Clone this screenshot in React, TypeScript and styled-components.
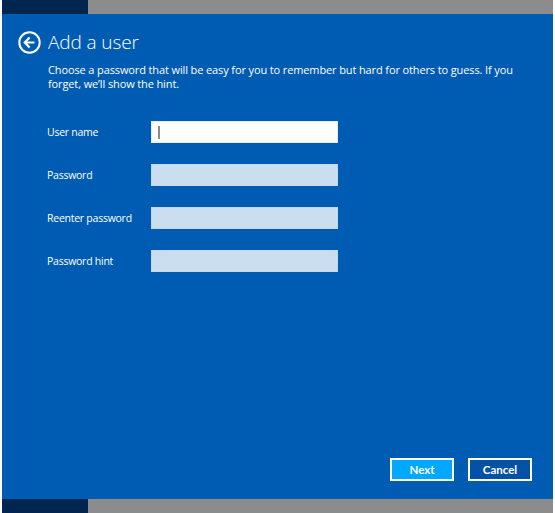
import * as React from 'react';
import styled, { createGlobalStyle } from 'styled-components';

const GlobalStyle = createGlobalStyle`
    html, body {
        margin: 0;
        padding: 0;
        background: #ffffff;
    }
`;

const Frame = styled.div`
    width: 555px;
    height: 513px;
    box-sizing: border-box;
    padding: 0 2px;
    display: flex;
    flex-direction: column;
    background: #ffffff;
    font-family: "Open Sans", "Noto Sans", sans-serif;
`;

const Strip = styled.div`
    height: 14px;
    display: flex;
    flex-shrink: 0;
`;

const StripDark = styled.div`
    width: 86px;
    background: #00264f;
`;

const StripGray = styled.div`
    flex: 1;
    background: #8c8c8c;
`;

const Panel = styled.div`
    flex: 1;
    background: #005cb2;
    color: #ffffff;
    display: flex;
    flex-direction: column;
    padding: 17px 21px 18px 16px;
`;

const Header = styled.div`
    display: flex;
    align-items: center;
    gap: 7px;
    height: 22px;
`;

const BackButton = styled.button`
    width: 23px;
    height: 23px;
    padding: 0;
    border: none;
    background: transparent;
    display: flex;
    cursor: pointer;
`;

const Title = styled.h1`
    margin: 0;
    font-size: 19px;
    font-weight: 300;
    line-height: 22px;
    letter-spacing: -0.1px;
`;

const Intro = styled.p`
    margin: 10px 0 0 30px;
    width: 478px;
    font-size: 11px;
    line-height: 14px;
    letter-spacing: -0.12px;
`;

const Form = styled.div`
    margin: 30px 0 0 29px;
    display: flex;
    flex-direction: column;
    gap: 21px;
`;

const Row = styled.label`
    display: flex;
    align-items: center;
    height: 22px;
`;

const Label = styled.span`
    width: 104px;
    font-size: 10.5px;
    letter-spacing: -0.25px;
`;

const Field = styled.div<{ $active?: boolean }>`
    width: 187px;
    height: 22px;
    box-sizing: border-box;
    background: ${p => (p.$active ? '#ffffff' : '#cbdef0')};
    border: 1px solid ${p => (p.$active ? '#e6eef7' : '#c3d8ee')};
    display: flex;
    align-items: center;
    padding-left: 6px;
`;

const Caret = styled.span`
    width: 2px;
    height: 13px;
    background: #8a8a8a;
`;

const Actions = styled.div`
    margin-top: auto;
    display: flex;
    justify-content: flex-end;
    gap: 14px;
`;

const Action = styled.button<{ $primary?: boolean }>`
    width: 64px;
    height: 23px;
    box-sizing: border-box;
    border: 2px solid #ffffff;
    background: ${p => (p.$primary ? '#00a9ff' : '#0551a6')};
    color: #ffffff;
    font-family: Lato, "Open Sans", sans-serif;
    font-size: 11.5px;
    font-weight: 700;
    padding: 0;
    cursor: pointer;
`;

const BackIcon: React.FC = () => (
    <svg width="23" height="23" viewBox="0 0 23 23" fill="none" stroke="#ffffff">
        <circle cx="11.5" cy="11.5" r="10.2" strokeWidth="2" />
        <path d="M11.6 6.6 L6.8 11.5 L11.6 16.4 M7.2 11.5 H16.4" strokeWidth="2.2" strokeLinejoin="miter" />
    </svg>
);

const fields: { label: string; active?: boolean }[] = [
    { label: 'User name', active: true },
    { label: 'Password' },
    { label: 'Reenter password' },
    { label: 'Password hint' },
];

const App: React.FC = () => {
    return (
        <>
            <GlobalStyle />
            <Frame>
                <Strip>
                    <StripDark />
                    <StripGray />
                </Strip>
                <Panel>
                    <Header>
                        <BackButton aria-label="Back">
                            <BackIcon />
                        </BackButton>
                        <Title>Add a user</Title>
                    </Header>
                    <Intro>
                        Choose a password that will be easy for you to remember but hard for others to guess. If you
                        forget, we’ll show the hint.
                    </Intro>
                    <Form>
                        {fields.map(f => (
                            <Row key={f.label}>
                                <Label>{f.label}</Label>
                                <Field $active={f.active}>{f.active && <Caret />}</Field>
                            </Row>
                        ))}
                    </Form>
                    <Actions>
                        <Action $primary>Next</Action>
                        <Action>Cancel</Action>
                    </Actions>
                </Panel>
                <Strip>
                    <StripDark />
                    <StripGray />
                </Strip>
            </Frame>
        </>
    );
};

export default App;
